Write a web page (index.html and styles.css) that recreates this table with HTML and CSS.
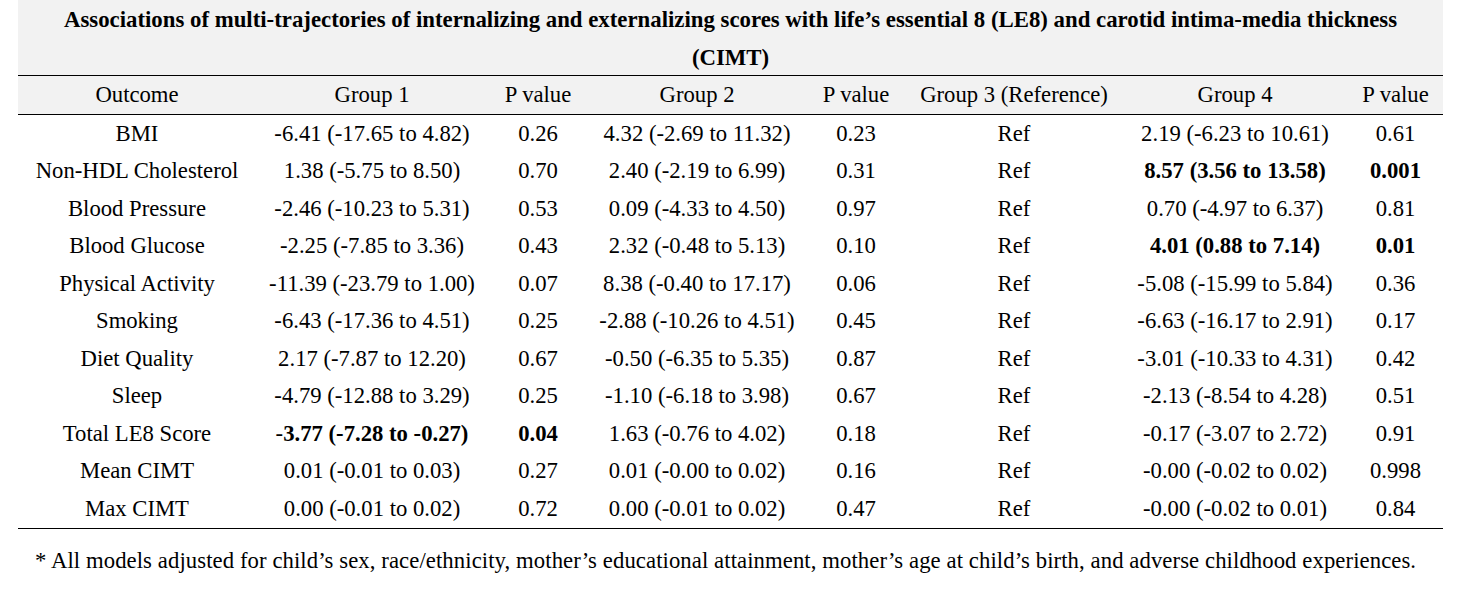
FILE: index.html
```html
<!DOCTYPE html>
<html>
<head>
<meta charset="utf-8">
<link rel="stylesheet" href="styles.css">
</head>
<body>
<div class="wrap">
  <div class="title">Associations of multi-trajectories of internalizing and externalizing scores with life’s essential 8 (LE8) and carotid intima-media thickness (CIMT)</div>
  <table class="tbl">
    <colgroup>
      <col class="c-out"><col class="c-g1"><col class="c-p1"><col class="c-g2"><col class="c-p2"><col class="c-g3"><col class="c-g4"><col class="c-p4">
    </colgroup>
    <thead>
      <tr><th>Outcome</th><th>Group 1</th><th>P value</th><th>Group 2</th><th>P value</th><th>Group 3 (Reference)</th><th>Group 4</th><th>P value</th></tr>
    </thead>
    <tbody>
      <tr><td>BMI</td><td>-6.41 (-17.65 to 4.82)</td><td>0.26</td><td>4.32 (-2.69 to 11.32)</td><td>0.23</td><td>Ref</td><td>2.19 (-6.23 to 10.61)</td><td>0.61</td></tr>
      <tr><td>Non-HDL Cholesterol</td><td>1.38 (-5.75 to 8.50)</td><td>0.70</td><td>2.40 (-2.19 to 6.99)</td><td>0.31</td><td>Ref</td><td class="b">8.57 (3.56 to 13.58)</td><td class="b">0.001</td></tr>
      <tr><td>Blood Pressure</td><td>-2.46 (-10.23 to 5.31)</td><td>0.53</td><td>0.09 (-4.33 to 4.50)</td><td>0.97</td><td>Ref</td><td>0.70 (-4.97 to 6.37)</td><td>0.81</td></tr>
      <tr><td>Blood Glucose</td><td>-2.25 (-7.85 to 3.36)</td><td>0.43</td><td>2.32 (-0.48 to 5.13)</td><td>0.10</td><td>Ref</td><td class="b">4.01 (0.88 to 7.14)</td><td class="b">0.01</td></tr>
      <tr><td>Physical Activity</td><td>-11.39 (-23.79 to 1.00)</td><td>0.07</td><td>8.38 (-0.40 to 17.17)</td><td>0.06</td><td>Ref</td><td>-5.08 (-15.99 to 5.84)</td><td>0.36</td></tr>
      <tr><td>Smoking</td><td>-6.43 (-17.36 to 4.51)</td><td>0.25</td><td>-2.88 (-10.26 to 4.51)</td><td>0.45</td><td>Ref</td><td>-6.63 (-16.17 to 2.91)</td><td>0.17</td></tr>
      <tr><td>Diet Quality</td><td>2.17 (-7.87 to 12.20)</td><td>0.67</td><td>-0.50 (-6.35 to 5.35)</td><td>0.87</td><td>Ref</td><td>-3.01 (-10.33 to 4.31)</td><td>0.42</td></tr>
      <tr><td>Sleep</td><td>-4.79 (-12.88 to 3.29)</td><td>0.25</td><td>-1.10 (-6.18 to 3.98)</td><td>0.67</td><td>Ref</td><td>-2.13 (-8.54 to 4.28)</td><td>0.51</td></tr>
      <tr><td>Total LE8 Score</td><td>-<b>3.77 (-7.28 to -0.27)</b></td><td class="b">0.04</td><td>1.63 (-0.76 to 4.02)</td><td>0.18</td><td>Ref</td><td>-0.17 (-3.07 to 2.72)</td><td>0.91</td></tr>
      <tr><td>Mean CIMT</td><td>0.01 (-0.01 to 0.03)</td><td>0.27</td><td>0.01 (-0.00 to 0.02)</td><td>0.16</td><td>Ref</td><td>-0.00 (-0.02 to 0.02)</td><td>0.998</td></tr>
      <tr><td>Max CIMT</td><td>0.00 (-0.01 to 0.02)</td><td>0.72</td><td>0.00 (-0.01 to 0.02)</td><td>0.47</td><td>Ref</td><td>-0.00 (-0.02 to 0.01)</td><td>0.84</td></tr>
    </tbody>
  </table>
  <p class="note">* All models adjusted for child’s sex, race/ethnicity, mother’s educational attainment, mother’s age at child’s birth, and adverse childhood experiences.</p>
</div>
</body>
</html>
```
FILE: styles.css
```css
html, body {
  margin: 0;
  padding: 0;
  background: #ffffff;
}
body {
  font-family: "Liberation Serif", "Times New Roman", serif;
  color: #000;
}
.wrap {
  width: 1425px;
  margin-left: 18px;
}
.title {
  background: #f2f2f2;
  height: 75px;
  box-sizing: border-box;
  padding: 1px 20px 0;
  text-align: center;
  font-weight: bold;
  font-size: 22.8px;
  line-height: 38px;
}
.tbl {
  width: 1425px;
  border-collapse: collapse;
  table-layout: fixed;
  font-size: 22.7px;
}
.c-out { width: 238px; }
.c-g1 { width: 232px; }
.c-p1 { width: 100px; }
.c-g2 { width: 218px; }
.c-p2 { width: 100px; }
.c-g3 { width: 216px; }
.c-g4 { width: 226px; }
.c-p4 { width: 95px; }
.tbl th {
  background: #f2f2f2;
  font-weight: normal;
  height: 38px;
  padding: 0;
  border-top: 1.5px solid #000;
  border-bottom: 1.5px solid #000;
  text-align: center;
  white-space: nowrap;
}
.tbl td {
  height: 37.5px;
  padding: 0;
  text-align: center;
  white-space: nowrap;
}
.tbl tbody tr:last-child td {
  border-bottom: 1.5px solid #000;
}
.tbl .b, .tbl b {
  font-weight: bold;
}
.note {
  margin: 0;
  padding: 20px 0 0 17px;
  font-size: 22.7px;
  line-height: 24px;
  letter-spacing: 0.09px;
}
```
